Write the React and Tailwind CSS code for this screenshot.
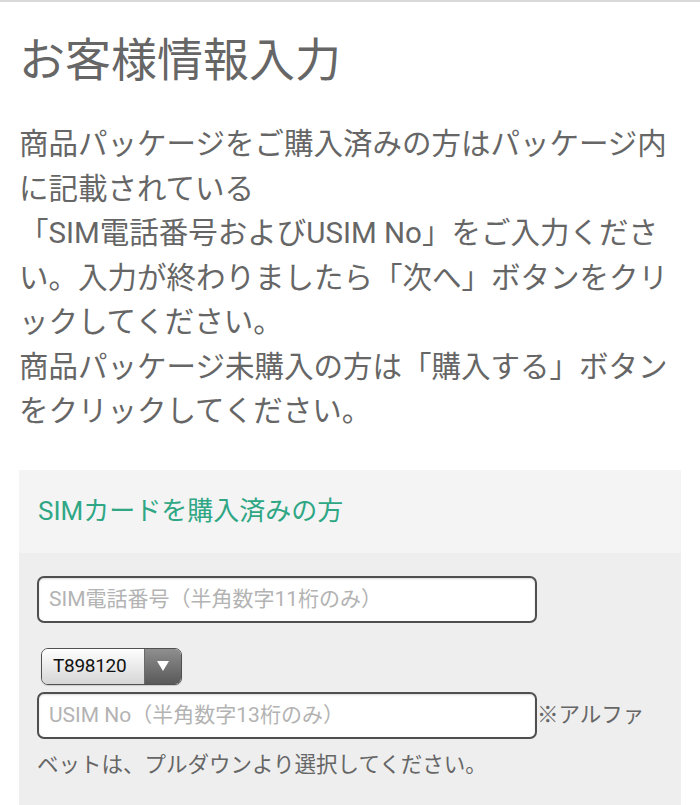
const font = { fontFamily: 'Roboto, "Noto Sans CJK JP", sans-serif' };

function SimSelect() {
  return (
    <div className="flex h-[37px] w-[141px] overflow-hidden rounded-[7px] border border-[#505050] shadow-[0_1px_1px_rgba(0,0,0,0.15)]">
      <div className="flex flex-1 items-center bg-gradient-to-b from-white to-[#d6d6d6] pl-[11px] text-[19px] tracking-[-0.3px] text-[#111]">
        T898120
      </div>
      <div className="flex w-[37px] items-center justify-center border-l border-[#6a6a6a] bg-gradient-to-b from-[#8f8f8f] to-[#595959]">
        <svg width="14" height="12" viewBox="0 0 14 12">
          <path d="M1 1h12L7 11z" fill="#fff" />
        </svg>
      </div>
    </div>
  );
}

function TextField({ placeholder }) {
  return (
    <input
      type="text"
      placeholder={placeholder}
      className="h-[47px] w-[500px] shrink-0 rounded-[7px] border-2 border-[#4f4f4f] bg-white px-[10px] text-[21px] text-[#333] shadow-[inset_0_1px_2px_rgba(0,0,0,0.15)] outline-none placeholder:text-[#b3b3b3]"
      style={font}
    />
  );
}

export default function App() {
  return (
    <div className="min-h-[805px] border-t-2 border-[#d9d9d9] bg-white text-[#666]" style={font}>
      <h1 className="px-[19px] pt-[31px] text-[46px] leading-[55px] font-normal">お客様情報入力</h1>

      <p className="mt-[34px] whitespace-nowrap px-[19px] text-[29.5px] leading-[44.5px]">
        商品パッケージをご購入済みの方はパッケージ内
        <br />
        に記載されている
        <br />
        「SIM電話番号およびUSIM No」をご入力くださ
        <br />
        い。入力が終わりましたら「次へ」ボタンをクリ
        <br />
        ックしてください。
        <br />
        商品パッケージ未購入の方は「購入する」ボタン
        <br />
        をクリックしてください。
      </p>

      <div className="mx-[19px] mt-[36px]">
        <div className="flex h-[83px] items-center bg-[#f4f4f4] px-[19px] text-[26px] text-[#2fa785]">
          SIMカードを購入済みの方
        </div>
        <div className="bg-[#eeeeee] px-[18px] pt-[23px] pb-[40px]">
          <TextField placeholder="SIM電話番号（半角数字11桁のみ）" />
          <div className="mt-[25px] pl-[4px]">
            <SimSelect />
          </div>
          <div className="mt-[7px] flex items-center">
            <TextField placeholder="USIM No（半角数字13桁のみ）" />
            <span className="text-[21.5px] whitespace-nowrap">※アルファ</span>
          </div>
          <div className="mt-[10px] text-[21.5px] leading-[32px]">ベットは、プルダウンより選択してください。</div>
        </div>
      </div>
    </div>
  );
}
